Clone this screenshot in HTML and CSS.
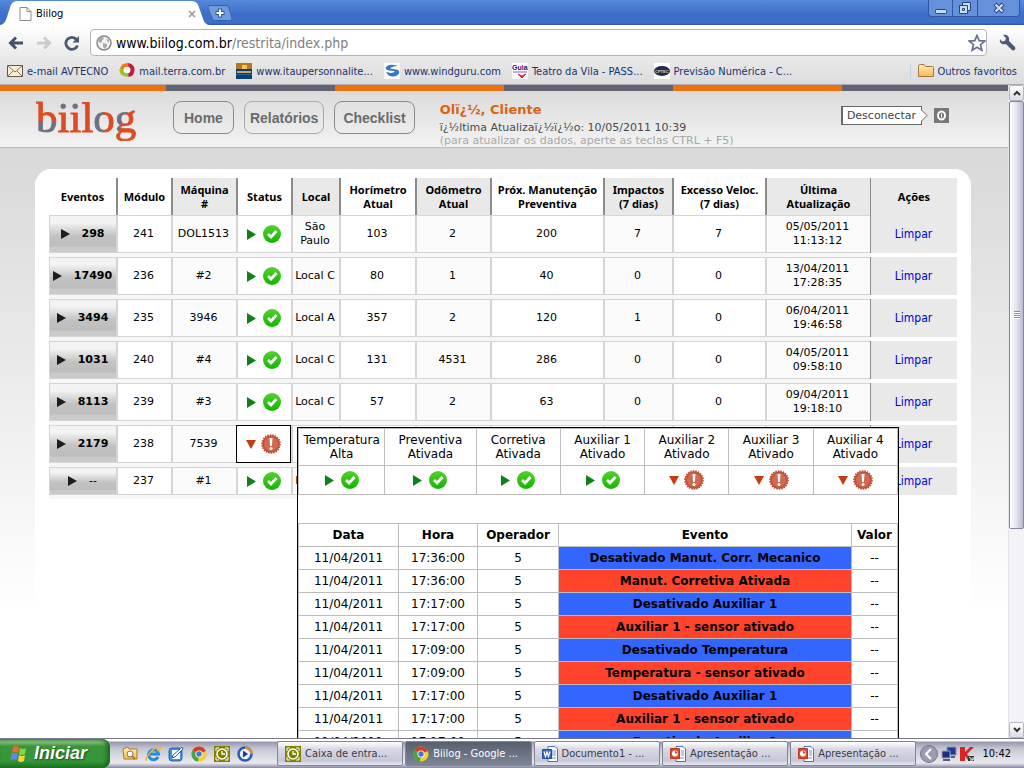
FILE: index.html
```html
<!DOCTYPE html>
<html lang="pt-BR">
<head>
<meta charset="utf-8">
<title>Biilog</title>
<link rel="stylesheet" href="styles.css">
</head>
<body>
<svg class="defs" aria-hidden="true">
  <defs>
    <linearGradient id="green" x2="0" y2="1"><stop stop-color="#55d02f"/><stop offset="1" stop-color="#12b600"/></linearGradient>
    <linearGradient id="gold" x2="0" y2="1"><stop stop-color="#fff0b8"/><stop offset="1" stop-color="#f7b951"/></linearGradient>
    <symbol id="right" viewBox="0 0 9 11"><path d="M0 0 9 5.500 0 11z" fill="#12801a"/></symbol>
    <symbol id="down" viewBox="0 0 10 9"><path d="M0 0H10L5 9z" fill="#c93a12"/></symbol>
    <symbol id="black" viewBox="0 0 9 10"><path d="M0 0 9 5 0 10z" fill="#1c1c1c"/></symbol>
    <symbol id="ok" viewBox="0 0 18 18"><circle cx="9" cy="9" r="9" fill="url(#green)"/><path d="M5 9l3 3 5.500-6" fill="none" stroke="#fff" stroke-width="2.800"/></symbol>
    <symbol id="alert" viewBox="0 0 20 20"><circle cx="10" cy="10" r="8.800" fill="#c4533a" stroke="#bd4f38" stroke-width="2" stroke-dasharray="1.500 1"/><circle cx="10" cy="10" r="7" fill="#d06b52"/><path d="M8.500 4h3l-.6 8H9.100z" fill="#fff"/><circle cx="10" cy="14.500" r="1.500" fill="#fff"/></symbol>
    <symbol id="chrome" viewBox="0 0 16 16"><circle cx="8" cy="8" r="7.500" fill="#f5cf2d"/><path d="M8 8 1.500 4.200A7.500 7.500 0 0 1 14.900 5z" fill="#d63b2c"/><path d="M8 8 1.500 4.200A7.500 7.500 0 0 0 7 15.500z" fill="#47a43c"/><circle cx="8" cy="8" r="3.600" fill="#fff"/><circle cx="8" cy="8" r="2.700" fill="#3c78cf"/></symbol>
    <symbol id="clock" viewBox="0 0 16 16"><path d="M0 0h16v16H0z" fill="#808000"/><path d="M2 5V2h3M11 2h3v3M14 11v3h-3M5 14H2v-3" stroke="#fff" fill="none"/><circle cx="8" cy="8" r="5" fill="none" stroke="#fff" stroke-width="1.600"/><path d="M8 5v3h3" fill="none" stroke="#fff" stroke-width="1.300"/></symbol>
    <symbol id="word" viewBox="0 0 16 16"><path d="M6 .5h7l2.500 2.500v12.500H6z" fill="#fff" stroke="#4b73b8"/><path d="M10 5h4M10 7h4M10 9h4M8 12h6" stroke="#7795cc"/><path d="M.5 3.500h9v9h-9z" fill="#3767b9" stroke="#244c96"/><path d="M2 5.500l1.500 5L5 6l1.500 4.500 1.500-5" fill="none" stroke="#fff" stroke-width="1.200"/></symbol>
    <symbol id="ppt" viewBox="0 0 16 16"><path d="M6 .5h7l2.500 2.500v12.500H6z" fill="#fff" stroke="#4b73b8"/><path d="M11 5h3M11 7h3M11 9h3M8 12h6" stroke="#7795cc"/><path d="M.5 2.500h9v10h-9z" fill="#dc4a2c" stroke="#b93a21"/><circle cx="5" cy="7.500" r="3" fill="#fff"/><path d="M5 7.500V5a2.500 2.500 0 0 1 2.500 2.500z" fill="#dc4a2c"/></symbol>
  </defs>
</svg>

<div class="browser">
  <div class="titlebar">
    <div class="tab">
      <svg class="tab-shape" viewBox="0 0 213 25" preserveAspectRatio="none"><path d="M0 25C5 24 6 21 8 14L11 5Q13 1 18 1H194Q199 1 201 5L206 19Q208 25 213 25z" fill="#fff"/></svg>
      <svg class="ic-page" viewBox="0 0 13 14"><path d="M1 .5h7L12 4.500V13.500H1z" fill="#fff" stroke="#8c8c8c"/><path d="M8 .5V4.500h4" fill="none" stroke="#8c8c8c"/></svg>
      <span class="tab-title">Biilog</span>
      <button class="bare" aria-label="Fechar guia"><svg width="8" height="8" viewBox="0 0 8 8"><path d="M1 1l6 6M7 1L1 7" stroke="#999" stroke-width="1.600"/></svg></button>
    </div>
    <button class="bare newtab" aria-label="Nova guia"><svg width="26" height="16" viewBox="0 0 26 16"><path d="M3 .5H19Q21 .5 22 3L25 13Q25.500 15.500 23 15.500H8Q6 15.500 5 13L1 3Q.5 .5 3 .5z" fill="#6f9ade" stroke="#3560b2"/><path d="M13 3.500v9M8.500 8h9" stroke="#365a9d" stroke-width="4"/><path d="M13 4.500v7M9.500 8h7" stroke="#fff" stroke-width="2"/></svg></button>
    <div class="winbtns">
      <button aria-label="Minimizar"><svg width="14" height="14" viewBox="0 0 14 14"><rect x="1.500" y="8.500" width="11" height="4" rx="1" fill="#c8dbf7" stroke="#27447d"/></svg></button>
      <button aria-label="Restaurar"><svg width="14" height="14" viewBox="0 0 14 14"><path d="M4.500 1.500h8v8h-3v3h-8v-8h3z" fill="#c8dbf7" stroke="#27447d"/><path d="M4.500 4.500h5v5M4.500 7.500h2v2h-2z" fill="none" stroke="#27447d"/></svg></button>
      <button aria-label="Fechar"><svg width="12" height="12" viewBox="0 0 12 12"><path d="M2 2l8 8M10 2l-8 8" stroke="#27447d" stroke-width="4"/><path d="M2.500 2.500l7 7M9.500 2.500l-7 7" stroke="#d4e3f9" stroke-width="2"/></svg></button>
    </div>
  </div>

  <div class="toolbar">
    <button class="bare" aria-label="Voltar"><svg width="16" height="14" viewBox="0 0 16 14"><path d="M15 7H3M8 1.500L2.500 7 8 12.500" fill="none" stroke="#45516b" stroke-width="3"/></svg></button>
    <button class="bare" aria-label="Avançar"><svg width="16" height="14" viewBox="0 0 16 14"><path d="M1 7h12M8 1.500L13.500 7 8 12.500" fill="none" stroke="#c9cbd0" stroke-width="3"/></svg></button>
    <button class="bare" aria-label="Recarregar"><svg width="16" height="16" viewBox="0 0 16 16"><path d="M12.500 4.500A6 6 0 1 0 13.500 10.500" fill="none" stroke="#4c5870" stroke-width="2.800"/><path d="M15 1v6.500H8.500z" fill="#4c5870"/></svg></button>
    <label class="omnibox">
      <svg width="16" height="16" viewBox="0 0 16 16"><circle cx="8" cy="8" r="7" fill="#f3f3f3" stroke="#888" stroke-width="1.500"/><path d="M3 3l4-1 1 2-2 1v2L4 8 2 6zM7 8l4 1v2l-2 3-2-2zM10 3l3 2v3l-2-2z" fill="#a9a9a9"/></svg>
      <span class="url"><b>www.biilog.com.br</b>/restrita/index.php</span>
      <button class="bare" aria-label="Favorito"><svg width="18" height="18" viewBox="0 0 18 18"><path d="M9 1.500l2.200 5.200 5.600.4-4.300 3.600 1.400 5.500L9 13.200l-4.900 3 1.400-5.500L1.200 7.100l5.600-.4z" fill="#fff" stroke="#67718b" stroke-width="1.700"/></svg></button>
    </label>
    <button class="bare" aria-label="Ferramentas"><svg width="17" height="17" viewBox="0 0 17 17"><path d="M4 1l3 3-1 3-3 .5L1 5C0 9 3 11 7 10l6 6q2 1 3-.5T16 13L10 7C11 3 8 0 4 1z" fill="#4c5973"/></svg></button>
  </div>

  <nav class="bookmarks">
    <a href="#"><svg width="16" height="16" viewBox="0 0 16 16"><path d="M.5 2.500h15v11H.5z" fill="#f8eedb" stroke="#6b5547"/><path d="M1 3l7 6 7-6M1 13l5-5M15 13l-5-5" fill="none" stroke="#8c7463"/></svg>e-mail AVTECNO</a>
    <a href="#"><svg width="16" height="16" viewBox="0 0 16 16"><path d="M8 0q7 0 7.500 6.500T9 14z" fill="#c81548"/><path d="M9 0Q2 0 1 6l5 2 4-3z" fill="#ee7b12"/><path d="M.5 6q-1 7 9 8V9z" fill="#9ac322"/><ellipse cx="8" cy="7" rx="3.500" ry="3.300" fill="#fff"/></svg>mail.terra.com.br</a>
    <a href="#"><svg width="16" height="16" viewBox="0 0 16 16"><path d="M0 0h16v16H0z" fill="#0d3f73"/><path d="M0 0h16v6H0z" fill="#b0782b"/><path d="M6 2h5v4H6z" fill="#f6c94e"/><path d="M1 8h14v2H1z" fill="#c0a77b"/><path d="M0 11h16v1H0z" fill="#286298"/></svg>www.itaupersonnalite...</a>
    <a href="#"><svg width="16" height="16" viewBox="0 0 16 16"><path d="M0 0h16v16H0z" fill="#fff"/><path d="M14 3Q5 0 2 4q-1 3 3 3.500l5 .5q2 1-3 2l-5-1Q5 15 12 13q4-2 3-5Q14 6 8 6L6 5q3-2 8-2z" fill="#3478c5"/></svg>www.windguru.com</a>
    <a href="#"><svg width="16" height="16" viewBox="0 0 16 16"><path d="M0 0h16v16H0z" fill="#fff"/><text x="0" y="7" font-family="Liberation Sans" font-size="7" font-weight="700" fill="#20107d">Guia</text><path d="M1 9h14" stroke="#7767a1"/><path d="M6 11l4 2 4-2-4 4z" fill="#f31752" stroke="#f31752"/></svg>Teatro da Vila - PASS...</a>
    <a href="#"><svg width="16" height="16" viewBox="0 0 16 16"><path d="M0 0h16v16H0z" fill="#fff"/><ellipse cx="8" cy="8" rx="8" ry="5" fill="#252a4d"/><text x="1" y="10" font-family="Liberation Sans" font-size="4" font-weight="700" fill="#ddd8ba">CPTEC</text></svg>Previsão Numérica - C...</a>
    <a href="#" class="others"><svg width="16" height="14" viewBox="0 0 16 14"><path d="M.5 2.500q0-2 2-2H6l1.500 2h7q1 0 1 1v9h-15z" fill="url(#gold)" stroke="#a5743c"/></svg>Outros favoritos</a>
  </nav>

  <div class="viewport">
    <div class="page">
      <header class="site-header">
        <a href="#" class="logo" aria-label="biilog"><span class="l-b">b</span><span class="l-i">ii</span><span class="l-l">l</span><span class="l-o">o</span><span class="l-g">g</span></a>
        <nav class="menu"><button>Home</button><button>Relatórios</button><button>Checklist</button></nav>
        <div class="greeting">
          <strong>Olï¿½, Cliente</strong>
          <span>ï¿½ltima Atualizaï¿½ï¿½o: 10/05/2011 10:39</span>
          <small>(para atualizar os dados, aperte as teclas CTRL + F5)</small>
        </div>
        <a href="#" class="logout"><span class="bubble">Desconectar</span><svg class="tip" width="7" height="19" viewBox="0 0 7 19"><path d="M0 4.500h1L6 9.500 1 14.500H0z" fill="#fff"/><path d="M.5 4L6 9.500.5 15" fill="none" stroke="#696969"/></svg><svg width="15" height="15" viewBox="0 0 15 15"><path d="M0 0h15v15H0z" fill="#777"/><ellipse cx="7.500" cy="7.500" rx="3.500" ry="4" fill="none" stroke="#fff" stroke-width="2"/><path d="M7.500 5.500v4" stroke="#fff"/></svg></a>
      </header>

      <main class="card">
        <table class="fleet">
          <colgroup><col class="c-ev"><col class="c-mod"><col class="c-maq"><col class="c-mod"><col class="c-loc"><col class="c-hor"><col class="c-odo"><col class="c-man"><col class="c-imp"><col class="c-exc"><col class="c-ult"><col class="c-aco"></colgroup>
          <thead><tr><th>Eventos</th><th>Módulo</th><th>Máquina<br>#</th><th>Status</th><th>Local</th><th>Horímetro<br>Atual</th><th>Odômetro<br>Atual</th><th>Próx. Manutenção<br>Preventiva</th><th>Impactos<br>(7 dias)</th><th>Excesso Veloc.<br>(7 dias)</th><th>Última<br>Atualização</th><th>Ações</th></tr></thead>
          <tbody>
            <tr><td><svg class="blk"><use href="#black"/></svg>298</td><td>241</td><td>DOL1513</td><td><svg class="tri"><use href="#right"/></svg><svg class="st"><use href="#ok"/></svg></td><td>São Paulo</td><td>103</td><td>2</td><td>200</td><td>7</td><td>7</td><td>05/05/2011 11:13:12</td><td><a href="#">Limpar</a></td></tr>
            <tr><td><svg class="blk"><use href="#black"/></svg>17490</td><td>236</td><td>#2</td><td><svg class="tri"><use href="#right"/></svg><svg class="st"><use href="#ok"/></svg></td><td>Local C</td><td>80</td><td>1</td><td>40</td><td>0</td><td>0</td><td>13/04/2011 17:28:35</td><td><a href="#">Limpar</a></td></tr>
            <tr><td><svg class="blk"><use href="#black"/></svg>3494</td><td>235</td><td>3946</td><td><svg class="tri"><use href="#right"/></svg><svg class="st"><use href="#ok"/></svg></td><td>Local A</td><td>357</td><td>2</td><td>120</td><td>1</td><td>0</td><td>06/04/2011 19:46:58</td><td><a href="#">Limpar</a></td></tr>
            <tr><td><svg class="blk"><use href="#black"/></svg>1031</td><td>240</td><td>#4</td><td><svg class="tri"><use href="#right"/></svg><svg class="st"><use href="#ok"/></svg></td><td>Local C</td><td>131</td><td>4531</td><td>286</td><td>0</td><td>0</td><td>04/05/2011 09:58:10</td><td><a href="#">Limpar</a></td></tr>
            <tr><td><svg class="blk"><use href="#black"/></svg>8113</td><td>239</td><td>#3</td><td><svg class="tri"><use href="#right"/></svg><svg class="st"><use href="#ok"/></svg></td><td>Local C</td><td>57</td><td>2</td><td>63</td><td>0</td><td>0</td><td>09/04/2011 19:18:10</td><td><a href="#">Limpar</a></td></tr>
            <tr><td><svg class="blk"><use href="#black"/></svg>2179</td><td>238</td><td>7539</td>
              <td class="open"><svg class="tri-d"><use href="#down"/></svg><svg class="al"><use href="#alert"/></svg>
                <div class="popup">
                  <table class="sensors">
                    <colgroup><col class="s-a"><col class="s-b"><col class="s-c"><col class="s-c"><col class="s-c"><col class="s-c"><col class="s-c"></colgroup>
                    <tr><th>Temperatura<br>Alta</th><th>Preventiva<br>Ativada</th><th>Corretiva<br>Ativada</th><th>Auxiliar 1<br>Ativado</th><th>Auxiliar 2<br>Ativado</th><th>Auxiliar 3<br>Ativado</th><th>Auxiliar 4<br>Ativado</th></tr>
                    <tr><td><svg class="tri"><use href="#right"/></svg><svg class="st"><use href="#ok"/></svg></td><td><svg class="tri"><use href="#right"/></svg><svg class="st"><use href="#ok"/></svg></td><td><svg class="tri"><use href="#right"/></svg><svg class="st"><use href="#ok"/></svg></td><td><svg class="tri"><use href="#right"/></svg><svg class="st"><use href="#ok"/></svg></td><td><svg class="tri-d"><use href="#down"/></svg><svg class="al"><use href="#alert"/></svg></td><td><svg class="tri-d"><use href="#down"/></svg><svg class="al"><use href="#alert"/></svg></td><td><svg class="tri-d"><use href="#down"/></svg><svg class="al"><use href="#alert"/></svg></td></tr>
                  </table>
                  <table class="events">
                    <colgroup><col class="e-data"><col class="e-hora"><col class="e-op"><col class="e-ev"><col class="e-val"></colgroup>
                    <tr><th>Data</th><th>Hora</th><th>Operador</th><th>Evento</th><th>Valor</th></tr>
                    <tr><td>11/04/2011</td><td>17:36:00</td><td>5</td><td class="off">Desativado Manut. Corr. Mecanico</td><td>--</td></tr>
                    <tr><td>11/04/2011</td><td>17:36:00</td><td>5</td><td class="on">Manut. Corretiva Ativada</td><td>--</td></tr>
                    <tr><td>11/04/2011</td><td>17:17:00</td><td>5</td><td class="off">Desativado Auxiliar 1</td><td>--</td></tr>
                    <tr><td>11/04/2011</td><td>17:17:00</td><td>5</td><td class="on">Auxiliar 1 - sensor ativado</td><td>--</td></tr>
                    <tr><td>11/04/2011</td><td>17:09:00</td><td>5</td><td class="off">Desativado Temperatura</td><td>--</td></tr>
                    <tr><td>11/04/2011</td><td>17:09:00</td><td>5</td><td class="on">Temperatura - sensor ativado</td><td>--</td></tr>
                    <tr><td>11/04/2011</td><td>17:17:00</td><td>5</td><td class="off">Desativado Auxiliar 1</td><td>--</td></tr>
                    <tr><td>11/04/2011</td><td>17:17:00</td><td>5</td><td class="on">Auxiliar 1 - sensor ativado</td><td>--</td></tr>
                    <tr><td>11/04/2011</td><td>17:17:00</td><td>5</td><td class="off">Desativado Auxiliar 1</td><td>--</td></tr>
                  </table>
                </div>
              </td>
              <td></td><td></td><td></td><td></td><td></td><td></td><td></td><td><a href="#">Limpar</a></td></tr>
            <tr class="short"><td class="none"><svg class="blk"><use href="#black"/></svg>--</td><td>237</td><td>#1</td><td><svg class="tri"><use href="#right"/></svg><svg class="st"><use href="#ok"/></svg></td><td>Local C</td><td></td><td></td><td></td><td></td><td></td><td></td><td><a href="#">Limpar</a></td></tr>
          </tbody>
        </table>
      </main>
    </div>
    <div class="scrollbar">
      <button aria-label="Rolar para cima"><svg width="8" height="6" viewBox="0 0 8 6"><path d="M1 5l3-3 3 3" fill="none" stroke="#333" stroke-width="2"/></svg></button>
      <div class="track"><div class="thumb"><i class="grip"></i></div></div>
      <button aria-label="Rolar para baixo"><svg width="8" height="6" viewBox="0 0 8 6"><path d="M1 1l3 3 3-3" fill="none" stroke="#333" stroke-width="2"/></svg></button>
    </div>
  </div>
</div>

<footer class="taskbar">
  <button class="start"><svg width="18" height="18" viewBox="0 0 18 18"><path d="M3 2q3-2 6 0L8 8Q5 6 2 8z" fill="#ef6532"/><path d="M10 3q3 2 6 0l-1 6q-3 2-6 0z" fill="#8cd140"/><path d="M1.500 9q3-2 6 0l-1 6Q4 13 .5 15z" fill="#5b8df0"/><path d="M9 10q3 2 6 0l-1 6q-3 2-6 0z" fill="#fbd13c"/></svg>Iniciar</button>
  <div class="quick">
    <button class="bare" aria-label="Explorar"><svg width="16" height="16" viewBox="0 0 16 16"><path d="M1 3l5-2 1 2h8v10H2z" fill="url(#gold)" stroke="#b37a20"/><circle cx="8" cy="8" r="3" fill="#fff" stroke="#777"/><path d="M10 10l3 3" stroke="#9b6b2f" stroke-width="1.500"/></svg></button>
    <button class="bare" aria-label="Internet Explorer"><svg width="16" height="16" viewBox="0 0 16 16"><path d="M13 11a5 5 0 1 1 .5-3H4" fill="none" stroke="#238bda" stroke-width="3"/><path d="M2 14Q-1 15 4 8T15 1q2 2-3 4" fill="none" stroke="#efb62f" stroke-width="1.300"/></svg></button>
    <button class="bare" aria-label="Área de trabalho"><svg width="16" height="16" viewBox="0 0 16 16"><rect x="1" y="2" width="13" height="13" rx="3" fill="#3e91de" stroke="#2267b2"/><path d="M4 4h8v9H4z" fill="#fff"/><path d="M5 9l6-5 3-3 1 2-8 8-3 1z" fill="#fff" stroke="#2267b2"/></svg></button>
    <button class="bare" aria-label="Chrome"><svg width="16" height="16"><use href="#chrome"/></svg></button>
    <button class="bare" aria-label="Correio"><svg width="16" height="16"><use href="#clock"/></svg></button>
    <button class="bare" aria-label="Media Player"><svg width="16" height="16" viewBox="0 0 16 16"><circle cx="8" cy="8" r="6.500" fill="#e5efff" stroke="#285cae" stroke-width="2.500"/><path d="M8 1.500A6.500 6.500 0 0 1 14.500 8" stroke="#e5882f" stroke-width="2.500" fill="none"/><path d="M6 4.500L11 8l-5 3.500z" fill="#173d91"/></svg></button>
  </div>
  <div class="tasks">
    <button><svg><use href="#clock"/></svg>Caixa de entra...</button>
    <button class="active"><svg><use href="#chrome"/></svg>Biilog - Google ...</button>
    <button><svg><use href="#word"/></svg>Documento1 - ...</button>
    <button><svg><use href="#ppt"/></svg>Apresentação ...</button>
    <button><svg><use href="#ppt"/></svg>Apresentação ...</button>
  </div>
  <div class="tray">
    <button class="bare" aria-label="Ícones ocultos"><svg width="18" height="18" viewBox="0 0 18 18"><circle cx="9" cy="9" r="8.500" fill="#9b9cae" stroke="#777887"/><path d="M11 4L6 9l5 5" fill="none" stroke="#fff" stroke-width="2"/></svg></button>
    <svg width="16" height="16" viewBox="0 0 16 16"><path d="M6 1h9v8H6z" fill="#243c8f" stroke="#8b93af"/><path d="M1 5h8v7H1z" fill="#1d2e7c" stroke="#98a1bc"/><path d="M2 14h7M10 11h4" stroke="#555b7a" stroke-width="2"/></svg>
    <svg width="14" height="14" viewBox="0 0 14 14"><path d="M0 0h5v5l5-5h4L7 7l5 6H8L5 9v5H0z" fill="#dc2128"/><path d="M8 9h6v5H8z" fill="#333"/><path d="M9 10l4 3M13 10v3h-3" stroke="#fff"/></svg>
    <time>10:42</time>
  </div>
</footer>
</body>
</html>
```
FILE: styles.css
```css
* { box-sizing: border-box; }
body {
  margin: 0;
  height: 100vh;
  display: flex;
  flex-direction: column;
  overflow: hidden;
  background: #fff;
  font-family: "DejaVu Sans", Verdana, sans-serif;
  font-size: 11px;
  color: #000;
}
button { font: inherit; color: inherit; cursor: pointer; }
.defs { position: absolute; width: 0; height: 0; }
.bare { border: 0; padding: 0; background: none; display: flex; align-items: center; }
svg { flex: none; }

/* Browser window */
.browser { flex: 1; min-height: 0; display: flex; flex-direction: column; }
.titlebar, .toolbar, .bookmarks, .taskbar {
  font-family: "DejaVu Sans Condensed", "DejaVu Sans", Tahoma, sans-serif;
}
.titlebar {
  display: flex;
  height: 25px;
  background: linear-gradient(#5588d8, #3d6dc8 60%, #3f6fca 92%, #2b4f9c);
}
.tab { position: relative; display: flex; align-items: center; width: 210px; padding: 2px 14px 0 19px; }
.tab-shape { position: absolute; inset: 0; width: 100%; height: 100%; }
.tab .ic-page { position: relative; width: 13px; height: 14px; margin-right: 4px; }
.tab-title { position: relative; flex: 1; }
.tab button { position: relative; }
.newtab { align-self: center; margin-left: -3px; }
.winbtns { display: flex; margin-left: auto; margin-right: 4px; height: 17px; }
.winbtns button {
  width: 25px;
  padding: 0;
  display: flex;
  align-items: center;
  justify-content: center;
  border: 1px solid #2f56a5;
  border-width: 0 1px 1px 0;
  background: #6590da;
}
.winbtns button:first-child { border-left-width: 1px; border-radius: 0 0 0 4px; }
.winbtns button:last-child { width: 42px; border-radius: 0 0 4px 0; }

.toolbar { display: flex; align-items: center; gap: 12px; height: 33px; padding: 2px 8px 0; background: linear-gradient(#fff, #e9e9e9); }
.omnibox {
  flex: 1;
  display: flex;
  align-items: center;
  height: 27px;
  padding: 0 0 0 5px;
  margin-left: -2px;
  border: 1px solid #b5b5b5;
  border-radius: 4px;
  background: #fff;
}
.url { flex: 1; margin-left: 4px; font-size: 14px; color: #808080; }
.url b { font-weight: 400; color: #000; }

.bookmarks { display: flex; align-items: center; gap: 11px; height: 27px; padding: 0 7px; background: linear-gradient(#e9e9e9, #dcdcdc); border-bottom: 1px solid #a9adb2; }
.bookmarks a { display: flex; align-items: center; gap: 4px; color: #17326f; text-decoration: none; white-space: nowrap; }
.bookmarks .others { margin-left: auto; padding-left: 7px; border-left: 1px solid #c5d3df; }

/* Page area */
.viewport { flex: 1; min-height: 0; display: flex; overflow: hidden; }
.page { flex: 1; min-width: 0; display: flex; flex-direction: column; overflow: hidden; background: linear-gradient(#d9d9d9 60px, #dcdcdc 110px, #fff 530px); }
.page::before {
  content: "";
  flex: none;
  height: 6px;
  background: repeating-linear-gradient(to right, #f07010 0 169px, #636270 169px 338px) -3px 0 / calc(100% + 3px) 100%;
}
.site-header {
  flex: none;
  display: flex;
  align-items: flex-start;
  height: 57px;
  padding: 10px 59px 0 36px;
  background: linear-gradient(#dbdbdb, #f3f3f3);
  border-bottom: 1px solid #bdbdbd;
}
.logo { width: 101px; margin-right: 36px; font: 43px/34px "Liberation Serif", serif; text-decoration: none; white-space: nowrap; }
.logo span { color: transparent; -webkit-background-clip: text; background-clip: text; -webkit-text-stroke: 1px transparent; }
.l-b { background-image: linear-gradient(#dd4b22 58%, #6f7080 58%); }
.l-i { background-image: linear-gradient(#6f7080 32%, #dd4b22 32%); }
.l-l { background-image: linear-gradient(#dd4b22, #dd4b22); }
.l-o { background-image: linear-gradient(to right, #6f7080 50%, #dd4b22 50%); }
.l-g { background-image: linear-gradient(115deg, #6f7080 48%, #dd4b22 48%); }
.menu { display: flex; gap: 10px; margin-right: 25px; }
.menu button {
  height: 33px;
  padding: 0 10px;
  border: 1px solid #8b8b8b;
  border-radius: 8px;
  background: transparent;
  color: #6b6b6b;
  font: bold 14px "Liberation Sans", Arial, sans-serif;
}
.menu button:nth-child(2) { padding: 0 5px; border-color: #ababab; }
.menu button:nth-child(3) { padding: 0 8px; }
.greeting { display: flex; flex-direction: column; white-space: nowrap; line-height: 13px; color: #4a4a4a; }
.greeting strong { font-size: 13px; line-height: 18px; margin-bottom: 2px; color: #d9650f; }
.greeting small { font-size: 11px; color: #a8a8a8; }
.logout { margin-left: auto; margin-top: 5px; display: flex; align-items: center; color: #444; text-decoration: none; }
.bubble { display: flex; align-items: center; height: 19px; padding: 0 5px 0 4px; border: 1px solid #696969; border-left-width: 2px; background: #fff; }
.tip { position: relative; margin: 0 6px 0 -1px; }

.card { flex: 1; margin: 21px 37px 0 35px; padding: 9px 14px 0; border-radius: 16px 16px 0 0; background: #fff; }
table { border-spacing: 0; table-layout: fixed; width: 100%; }
.c-ev { width: 67px; } .c-mod { width: 55px; } .c-maq { width: 65px; } .c-loc { width: 48px; }
.c-hor { width: 76px; } .c-odo { width: 75px; } .c-man { width: 113px; } .c-imp { width: 69px; }
.c-exc { width: 93px; } .c-ult { width: 105px; } .c-aco { width: 87px; }
th, td { padding: 0; text-align: center; }
.fleet { line-height: 14px; }
.fleet > thead th { height: 37px; font-family: "Noto Sans", sans-serif; font-size: 11px; border-left: 2px solid #8b8b8b; white-space: nowrap; }
.fleet > thead th:first-child { border-left: 0; }
.fleet > thead th:nth-child(2n + 3) { background: #e9e9e9; }
.fleet > thead th:last-child { background: #e9e9e9; border-left-width: 1px; }
.fleet > tbody > tr > td {
  height: 42px;
  padding: 0 2px;
  border-bottom: 4px solid #f6f6f6;
  box-shadow: inset 2px 0 #d5d5d5, inset 0 1px #d5d5d5, inset 0 -1px #d5d5d5;
}
.fleet > tbody > .short > td { height: 32px; }
.fleet > tbody > tr > td:nth-child(odd) { background: #fbfbfb; }
.fleet > tbody > tr > td:first-child { background: linear-gradient(#f3f3f3 20%, #c2c2c2 55%, #bdbdbd 82%, #cacaca 84%); font-weight: 700; box-shadow: inset 1px 0 #d5d5d5, inset 0 1px #d5d5d5, inset 0 -1px #d5d5d5; white-space: nowrap; }
.fleet > tbody > tr > td.none { font-weight: 400; }
.fleet > tbody > tr > td:nth-child(11) { padding: 0 20px; }
.fleet > tbody > tr > td:last-child { background: #e9e9e9; border-bottom-color: #fff; box-shadow: inset 1px 0 #8b8b8b; }
.fleet a { color: #0000e0; text-decoration: none; font-size: 12px; font-family: "DejaVu Sans Condensed", "DejaVu Sans", sans-serif; }
.fleet svg { vertical-align: middle; }
.blk { width: 9px; height: 10px; margin-right: 12px; }
.tri { width: 9px; height: 11px; margin-right: 7px; }
.st { width: 18px; height: 18px; }
.tri-d { width: 10px; height: 9px; margin-right: 5px; }
.al { width: 20px; height: 20px; }
.fleet > tbody > tr > td.open { position: relative; box-shadow: inset 0 0 0 1px #000; }

/* Sensor pop-up, opened from a status cell */
.popup { position: absolute; z-index: 2; left: 61px; top: 2px; width: 602px; border: 1px solid #000; background: #fff; font-size: 12px; }
.popup table { border-collapse: collapse; }
.popup th, .popup td { border: 1px solid #bdbdbd; }
.popup .off, .popup .on { font-weight: 700; }
.popup .off { background: #3366ff; }
.popup .on { background: #ff442b; }
.sensors { margin-bottom: 28px; }
.sensors th { height: 37px; font-weight: 400; }
.sensors td { height: 29px; }
.s-a { width: 86px; } .s-b { width: 91px; } .s-c { width: 84px; }
.events th, .events td { height: 23px; }
.e-data { width: 100px; } .e-hora { width: 79px; } .e-op { width: 81px; } .e-ev { width: 293px; } .e-val { width: 46px; }

.scrollbar { width: 16px; display: flex; flex-direction: column; background: #f2f2f7; border-left: 1px solid #e4e4ec; }
.scrollbar button { height: 16px; padding: 0; display: flex; align-items: center; justify-content: center; border: 1px solid #b5b5c5; border-radius: 2px; background: linear-gradient(#fff, #dcdce8); }
.track { flex: 1; }
.thumb { height: 69%; display: flex; align-items: center; justify-content: center; border: 1px solid #85869b; border-radius: 2px; background: linear-gradient(to right, #fff, #e2e2ee 50%, #b9b9d0); }
.grip { width: 6px; height: 8px; background: repeating-linear-gradient(#8b8ca3 0 1px, #fff 1px 2px); }

/* Desktop taskbar */
.taskbar { flex: none; display: flex; height: 30px; border-top: 1px solid #77788f; background: linear-gradient(#fff 2px, #9697ae 3px, #c8c8d5 10px, #e9e9ee 24px, #8586a0); }
.start {
  width: 110px;
  display: flex;
  align-items: center;
  gap: 6px;
  padding: 0 0 0 10px;
  border: 0;
  border-radius: 0 8px 8px 0;
  background: linear-gradient(#5fa85b, #87c07f 10%, #3a9539 25%, #36973a 75%, #1f7425);
  box-shadow: inset -3px 0 4px #176b1c;
  color: #fff;
  font: italic bold 18px "Liberation Sans", Arial, sans-serif;
  text-shadow: 1px 1px 2px #174d18;
}
.quick { display: flex; gap: 7px; margin-left: 12px; }
.tasks { flex: 1; display: flex; gap: 2px; margin-left: 24px; padding: 2px 0; min-width: 0; }
.tasks button { flex: 1; min-width: 0; display: flex; align-items: center; gap: 4px; padding: 0 7px; border: 1px solid #84859d; border-radius: 2px; background: linear-gradient(#fff, #d9d9e4 30%, #c7c8d7 80%, #e9e9f1); color: #3b3b45; white-space: nowrap; overflow: hidden; }
.tasks svg { width: 16px; height: 16px; }
.tasks .active { background: linear-gradient(#56606f, #7b8594); color: #fff; }
.tray { display: flex; align-items: center; gap: 3px; padding: 0 13px 0 4px; }
.tray time { margin-left: 5px; }
```
